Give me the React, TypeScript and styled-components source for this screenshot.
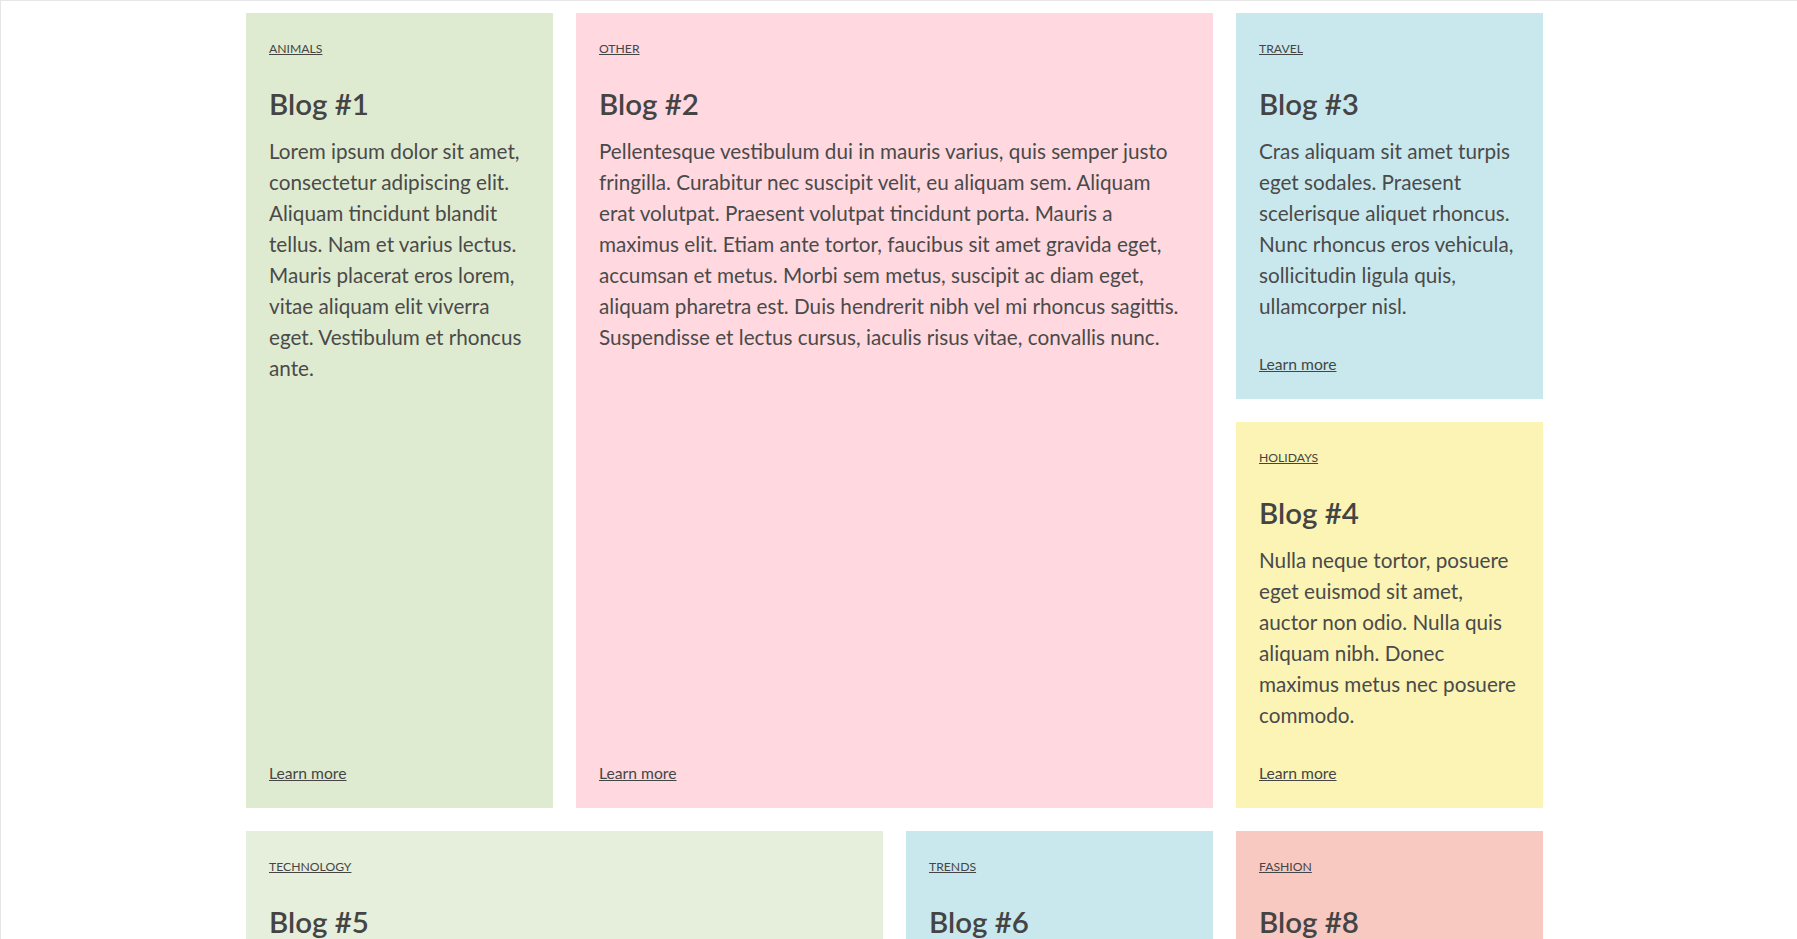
import React from 'react'
import styled, { createGlobalStyle } from 'styled-components';

interface Post {
    id: number;
    category: string;
    title: string;
    body: string;
    color: string;
    cols?: number;
    rows?: number;
}

const posts: Post[] = [
    {
        id: 1,
        category: 'Animals',
        title: 'Blog #1',
        body: 'Lorem ipsum dolor sit amet, consectetur adipiscing elit. Aliquam tincidunt blandit tellus. Nam et varius lectus. Mauris placerat eros lorem, vitae aliquam elit viverra eget. Vestibulum et rhoncus ante.',
        color: '#dfebd0',
        rows: 2,
    },
    {
        id: 2,
        category: 'Other',
        title: 'Blog #2',
        body: 'Pellentesque vestibulum dui in mauris varius, quis semper justo fringilla. Curabitur nec suscipit velit, eu aliquam sem. Aliquam erat volutpat. Praesent volutpat tincidunt porta. Mauris a maximus elit. Etiam ante tortor, faucibus sit amet gravida eget, accumsan et metus. Morbi sem metus, suscipit ac diam eget, aliquam pharetra est. Duis hendrerit nibh vel mi rhoncus sagittis. Suspendisse et lectus cursus, iaculis risus vitae, convallis nunc.',
        color: '#ffd9df',
        cols: 2,
        rows: 2,
    },
    {
        id: 3,
        category: 'Travel',
        title: 'Blog #3',
        body: 'Cras aliquam sit amet turpis eget sodales. Praesent scelerisque aliquet rhoncus. Nunc rhoncus eros vehicula, sollicitudin ligula quis, ullamcorper nisl.',
        color: '#c9e8ed',
    },
    {
        id: 4,
        category: 'Holidays',
        title: 'Blog #4',
        body: 'Nulla neque tortor, posuere eget euismod sit amet, auctor non odio. Nulla quis aliquam nibh. Donec maximus metus nec posuere commodo.',
        color: '#fbf4b5',
    },
    {
        id: 5,
        category: 'Technology',
        title: 'Blog #5',
        body: 'Vivamus feugiat, mauris in pretium bibendum, leo risus fermentum lorem, sed vehicula nisl ligula ut neque. Integer id libero vel velit porta aliquet.',
        color: '#e6efdb',
        cols: 2,
    },
    {
        id: 6,
        category: 'Trends',
        title: 'Blog #6',
        body: 'Sed ultrices, erat at tincidunt facilisis, nisi mi commodo enim, non porta augue ipsum a magna.',
        color: '#c9e8ed',
    },
    {
        id: 7,
        category: 'Food',
        title: 'Blog #7',
        body: 'Phasellus euismod arcu at justo lacinia, sit amet tempus nibh bibendum. Fusce non lorem at erat varius gravida.',
        color: '#fbf4b5',
        cols: 2,
    },
    {
        id: 8,
        category: 'Fashion',
        title: 'Blog #8',
        body: 'Donec pharetra ipsum sit amet elit ultricies, in tempor massa laoreet. Curabitur vel tortor quis nunc tincidunt.',
        color: '#f7c9c0',
    },
];

const GlobalStyle = createGlobalStyle`
    * {
        box-sizing: border-box;
    }
    body {
        margin: 0;
        background: #fff;
        font-family: Lato, "Open Sans", sans-serif;
        color: #454545;
    }
`;

export default function App() {
    return (
        <Page>
            <GlobalStyle />
            <Grid>
                {posts.map((post) => (
                    <Card key={post.id} color={post.color} cols={post.cols || 1} rows={post.rows || 1}>
                        <Category href="#">{post.category}</Category>
                        <Title>{post.title}</Title>
                        <Body>{post.body}</Body>
                        <LearnMore href="#">Learn more</LearnMore>
                    </Card>
                ))}
            </Grid>
        </Page>
    )
}

const Page = styled.div`
    min-height: 100vh;
    border-top: 1px solid #e6e6e6;
    border-left: 1px solid #e6e6e6;
    padding: 12px 9px 40px 0;
`;

const Grid = styled.div`
    width: 1297px;
    margin: 0 auto;
    display: grid;
    grid-template-columns: repeat(4, 307px);
    grid-auto-rows: 386px;
    grid-auto-flow: dense;
    gap: 23px;
`;

const Card = styled.article<{ color: string; cols: number; rows: number }>`
    background-color: ${(props) => props.color};
    grid-column: span ${(props) => props.cols};
    grid-row: span ${(props) => props.rows};
    display: flex;
    flex-direction: column;
    align-items: flex-start;
    padding: 23px 23px 22px;
    overflow: hidden;
`;

const Category = styled.a`
    font-size: 12.2px;
    line-height: 26px;
    text-transform: uppercase;
    color: #454545;
    text-decoration: underline;
`;

const Title = styled.h2`
    margin: 24px 0 0;
    font-size: 29.5px;
    line-height: 1.2;
    font-weight: 600;
    color: #444;
`;

const Body = styled.p`
    margin: 15px 0 0;
    font-size: 20.7px;
    line-height: 30.9px;
    color: #4a4a4a;
`;

const LearnMore = styled.a`
    margin-top: auto;
    font-size: 15.7px;
    line-height: 1.5;
    color: #454545;
    text-decoration: underline;
`;
